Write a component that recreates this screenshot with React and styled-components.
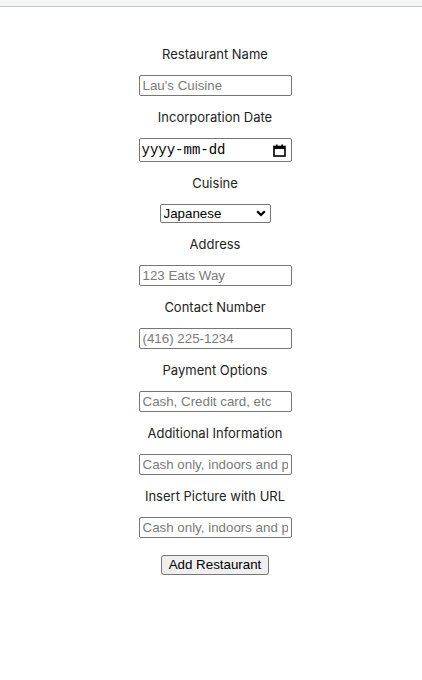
import React from "react";
import styled, { createGlobalStyle } from "styled-components";

const Global = createGlobalStyle`
  html, body { margin: 0; padding: 0; background: #fff; }
  body { font-family: Inter, "Noto Sans", sans-serif; }
`;

const TopBar = styled.div`
  height: 6px;
  background: #f3f4f6;
  border-bottom: 1px solid #c6c6c8;
`;

const Form = styled.form`
  display: flex;
  flex-direction: column;
  align-items: center;
  padding-top: 26px;
  padding-left: 8px;
`;

const Label = styled.label`
  display: block;
  margin: 13px 0;
  font-family: Inter, "Noto Sans", sans-serif;
  font-size: 13px;
  line-height: 16px;
  color: #222;
  text-align: center;
`;

const TextInput = styled.input`
  box-sizing: border-box;
  width: 153px;
  height: 21px;
  margin: 0;
  padding: 1px 3px;
  border: 1px solid #767676;
  border-radius: 2px;
  font-family: "Liberation Sans", Arial, sans-serif;
  font-size: 13.33px;
  color: #000;
  background: #fff;
  outline: none;
  &::placeholder { color: #7a7a7a; opacity: 1; }
`;

const DateBox = styled.div`
  box-sizing: border-box;
  width: 153px;
  height: 24px;
  display: flex;
  align-items: center;
  justify-content: space-between;
  padding: 0 5px 0 2px;
  border: 1px solid #767676;
  border-radius: 2px;
  background: #fff;
`;

const DateText = styled.input`
  width: 110px;
  border: none;
  padding: 0;
  margin: 0;
  outline: none;
  background: transparent;
  font-family: "Liberation Mono", "Courier New", monospace;
  font-size: 14px;
  color: #000;
  &::placeholder { color: #000; opacity: 1; }
`;

const SelectWrap = styled.div`
  position: relative;
  display: block;
  width: 111px;
  height: 19px;
`;

const Select = styled.select`
  appearance: none;
  -webkit-appearance: none;
  display: block;
  box-sizing: border-box;
  width: 111px;
  height: 19px;
  margin: 0;
  padding: 0 0 0 3px;
  border: 1px solid #767676;
  border-radius: 2px;
  background: #fff;
  font-family: "Liberation Sans", Arial, sans-serif;
  font-size: 13.33px;
  line-height: 17px;
  color: #000;
  outline: none;
`;

const Chevron = styled.svg`
  position: absolute;
  right: 5px;
  top: 6px;
  pointer-events: none;
`;

const Button = styled.button`
  display: block;
  box-sizing: border-box;
  width: 108px;
  height: 20px;
  margin: 17px 0 0;
  padding: 0;
  border: 1px solid #767676;
  border-radius: 3px;
  background: #efefef;
  font-family: "Liberation Sans", Arial, sans-serif;
  font-size: 13.33px;
  color: #000;
  line-height: 18px;
`;

const fields = [
  ["Address", "123 Eats Way"],
  ["Contact Number", "(416) 225-1234"],
  ["Payment Options", "Cash, Credit card, etc"],
  ["Additional Information", "Cash only, indoors and patio"],
  ["Insert Picture with URL", "Cash only, indoors and patio"],
];

export default function App() {
  return (
    <>
      <Global />
      <TopBar />
      <Form onSubmit={(e) => e.preventDefault()}>
        <Label>Restaurant Name</Label>
        <TextInput placeholder="Lau's Cuisine" />
        <Label>Incorporation Date</Label>
        <DateBox>
          <DateText placeholder="yyyy-mm-dd" />
          <svg width="13" height="13" viewBox="0 0 13 13">
            <rect x="1" y="2.5" width="11" height="9.5" fill="none" stroke="#000" strokeWidth="1.6" />
            <rect x="1" y="2.5" width="11" height="2.5" fill="#000" />
            <rect x="3" y="0.5" width="1.6" height="3" fill="#000" />
            <rect x="8.4" y="0.5" width="1.6" height="3" fill="#000" />
          </svg>
        </DateBox>
        <Label>Cuisine</Label>
        <SelectWrap>
          <Select defaultValue="Japanese">
            <option>Japanese</option>
            <option>Chinese</option>
            <option>Italian</option>
            <option>Mexican</option>
          </Select>
          <Chevron width="10" height="7" viewBox="0 0 10 7">
            <path d="M1.2 1.2 L5 5 L8.8 1.2" fill="none" stroke="#000" strokeWidth="2.2" />
          </Chevron>
        </SelectWrap>
        {fields.map(([label, ph]) => (
          <React.Fragment key={label}>
            <Label>{label}</Label>
            <TextInput placeholder={ph} />
          </React.Fragment>
        ))}
        <Button type="submit">Add Restaurant</Button>
      </Form>
    </>
  );
}
